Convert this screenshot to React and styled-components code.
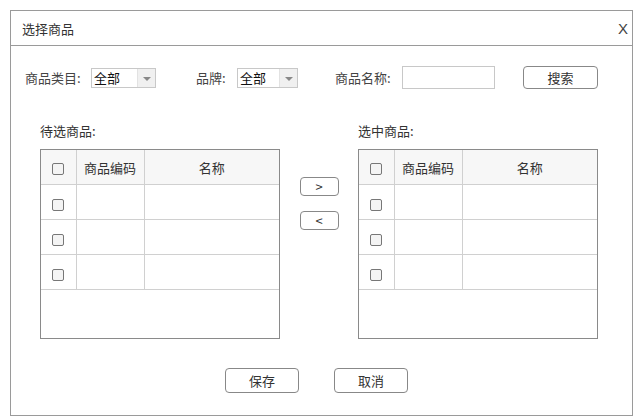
import React from "react";
import styled, { createGlobalStyle } from "styled-components";

const GlobalStyle = createGlobalStyle`
    body {
        margin: 0;
        background: #fff;
        font-family: "Noto Sans CJK SC", "Noto Sans", sans-serif;
        color: #333;
    }
`;

const App = () => {
    const rows = [1, 2, 3];
    return (
        <>
            <GlobalStyle />
            <Dialog>
                <Header>
                    <Title>选择商品</Title>
                    <Close>X</Close>
                </Header>

                <FilterRow>
                    <Group width={171}>
                        <Label width={66}>商品类目:</Label>
                        <Select width={65}>
                            <SelectText>全部</SelectText>
                            <Arrow />
                        </Select>
                    </Group>
                    <Group width={139}>
                        <Label width={41}>品牌:</Label>
                        <Select width={61}>
                            <SelectText>全部</SelectText>
                            <Arrow />
                        </Select>
                    </Group>
                    <Group width={188}>
                        <Label width={67}>商品名称:</Label>
                        <Input />
                    </Group>
                    <Button width={75} height={23}>搜索</Button>
                </FilterRow>

                <Transfer>
                    <Panel>
                        <PanelTitle>待选商品:</PanelTitle>
                        <GoodsTable rows={rows} />
                    </Panel>
                    <Middle>
                        <Button width={39} height={19}>&gt;</Button>
                        <Button width={39} height={19}>&lt;</Button>
                    </Middle>
                    <Panel>
                        <PanelTitle>选中商品:</PanelTitle>
                        <GoodsTable rows={rows} />
                    </Panel>
                </Transfer>

                <Footer>
                    <Button width={74} height={25}>保存</Button>
                    <Button width={74} height={25}>取消</Button>
                </Footer>
            </Dialog>
        </>
    );
};

const GoodsTable = ({ rows }) => (
    <TableBox>
        <Table>
            <colgroup>
                <col style={{ width: 35 }} />
                <col style={{ width: 68 }} />
                <col />
            </colgroup>
            <thead>
                <tr>
                    <Th><Check /></Th>
                    <Th>商品编码</Th>
                    <Th>名称</Th>
                </tr>
            </thead>
            <tbody>
                {rows.map((r) => (
                    <tr key={r}>
                        <Td><Check /></Td>
                        <Td />
                        <Td />
                    </tr>
                ))}
            </tbody>
        </Table>
    </TableBox>
);

export default App;

const Dialog = styled.div`
    margin: 10px 0 0 10px;
    width: 621px;
    height: 404px;
    border: 1px solid #9a9a9a;
    display: flex;
    flex-direction: column;
`;

const Header = styled.div`
    height: 34px;
    border-bottom: 1px solid #9a9a9a;
    display: flex;
    align-items: center;
    justify-content: space-between;
    padding: 0 4px 0 11px;
`;

const Title = styled.div`
    font-size: 13px;
    color: #333;
`;

const Close = styled.div`
    font-family: "Liberation Sans", sans-serif;
    font-size: 15px;
    color: #444;
`;

const FilterRow = styled.div`
    display: flex;
    align-items: center;
    height: 23px;
    margin-top: 20px;
    padding-left: 14px;
`;

const Group = styled.div`
    display: flex;
    align-items: center;
    width: ${(p) => p.width}px;
`;

const Label = styled.div`
    width: ${(p) => p.width}px;
    font-size: 13px;
    color: #444;
`;

const Select = styled.div`
    width: ${(p) => p.width}px;
    height: 20px;
    border: 1px solid #c8c8c8;
    display: flex;
    align-items: stretch;
    box-sizing: border-box;
`;

const SelectText = styled.div`
    flex: 1;
    font-size: 13px;
    line-height: 18px;
    padding-left: 2px;
    color: #111;
`;

const Arrow = styled.div`
    width: 17px;
    background: #f0f0f0;
    border-left: 1px solid #e2e2e2;
    position: relative;
    &::after {
        content: "";
        position: absolute;
        left: 5px;
        top: 8px;
        border-left: 4px solid transparent;
        border-right: 4px solid transparent;
        border-top: 4px solid #888;
    }
`;

const Input = styled.div`
    width: 93px;
    height: 23px;
    box-sizing: border-box;
    border: 1px solid #c8c8c8;
`;

const Button = styled.div`
    width: ${(p) => p.width}px;
    height: ${(p) => p.height}px;
    box-sizing: border-box;
    border: 1px solid #888;
    border-radius: 4px;
    display: flex;
    align-items: center;
    justify-content: center;
    font-size: 13px;
    color: #333;
    background: #fff;
`;

const Transfer = styled.div`
    display: flex;
    padding-left: 29px;
    margin-top: 32px;
`;

const Panel = styled.div`
    width: 240px;
    display: flex;
    flex-direction: column;
`;

const PanelTitle = styled.div`
    font-size: 13px;
    color: #333;
    height: 20px;
    line-height: 20px;
    margin-bottom: 8px;
`;

const Middle = styled.div`
    width: 78px;
    display: flex;
    flex-direction: column;
    align-items: center;
    gap: 15px;
    padding-top: 56px;
`;

const TableBox = styled.div`
    height: 190px;
    box-sizing: border-box;
    border: 1px solid #8a8a8a;
`;

const Table = styled.table`
    width: 100%;
    border-collapse: collapse;
    table-layout: fixed;
`;

const Th = styled.th`
    height: 34px;
    font-weight: normal;
    font-size: 13px;
    color: #333;
    background: #f7f7f7;
    border-bottom: 1px solid #d0d0d0;
    border-right: 1px solid #d0d0d0;
    text-align: center;
    padding: 0;
    &:last-child {
        border-right: none;
    }
`;

const Td = styled.td`
    height: 34px;
    border-bottom: 1px solid #d0d0d0;
    border-right: 1px solid #d0d0d0;
    text-align: center;
    padding: 0;
    &:last-child {
        border-right: none;
    }
`;

const Check = styled.span`
    display: inline-block;
    width: 10px;
    height: 10px;
    border: 1px solid #777;
    border-radius: 2px;
    background: #f4f4f4;
    vertical-align: middle;
`;

const Footer = styled.div`
    display: flex;
    gap: 35px;
    padding-left: 214px;
    margin-top: 29px;
`;
